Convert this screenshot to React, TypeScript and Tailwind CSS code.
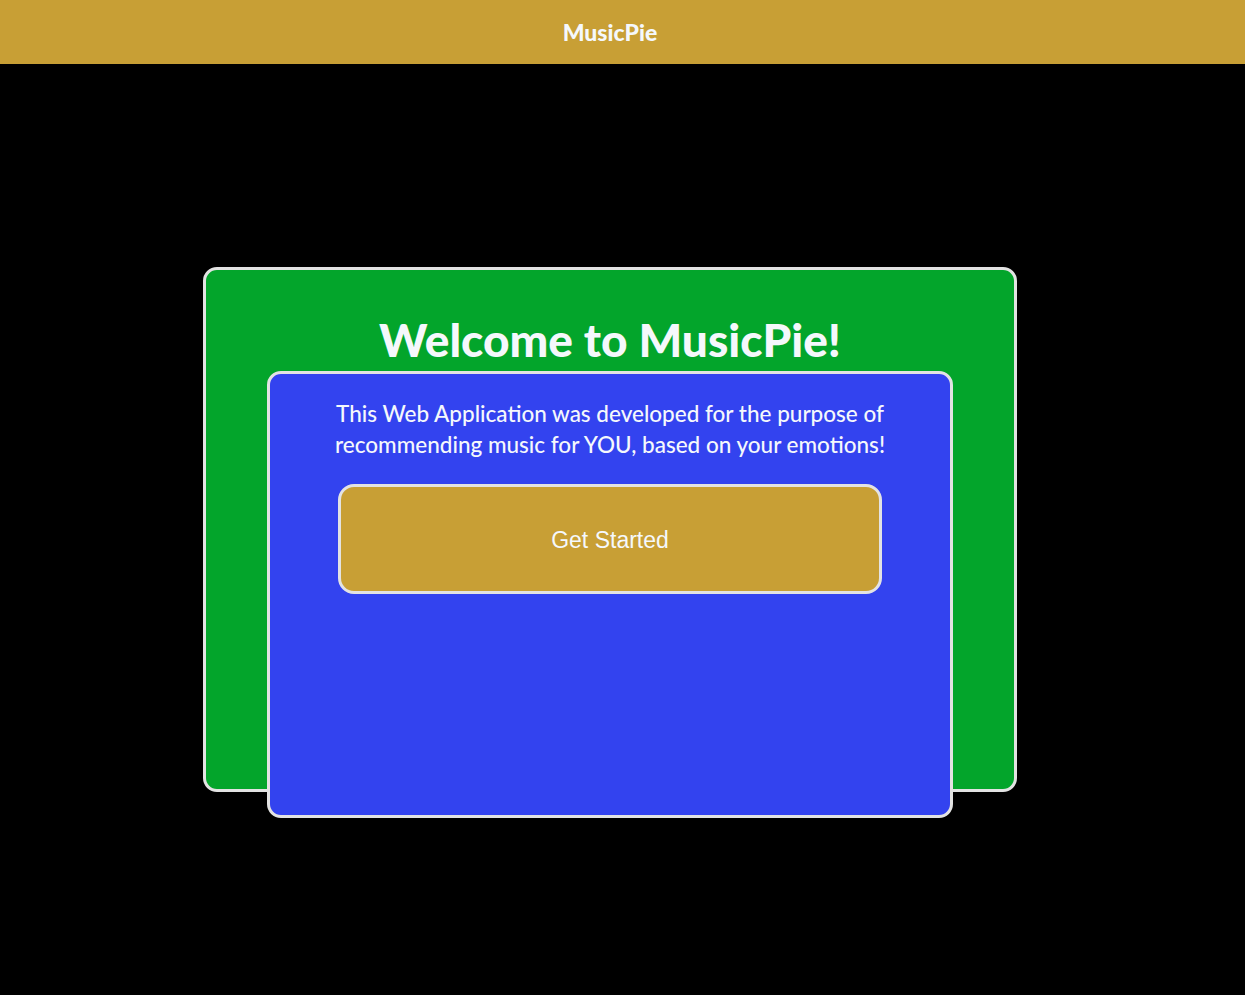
export default function App() {
  return (
    <div className="min-h-screen bg-black flex flex-col">
      <header className="h-16 bg-[#c89f35] flex items-center justify-center pr-[25px] shrink-0">
        <span className="text-[#f5f8fc] text-[23px] font-black font-['Lato',sans-serif]">MusicPie</span>
      </header>
      <main className="flex-1 flex items-center justify-center pr-[25px]">
        <div className="w-[814px] h-[525px] bg-[#03a52b] border-[3px] border-[#e3e3e3] rounded-[14px] flex flex-col items-center pt-[44px]">
          <h1 className="text-[#f5f8fc] text-[46px] leading-[52px] font-black font-['Lato',sans-serif]">Welcome to MusicPie!</h1>
          <div className="mt-[5px] w-[686px] h-[447px] shrink-0 bg-[#3343ef] border-[3px] border-[#e3e3e3] rounded-[14px] flex flex-col items-center pt-[24px]">
            <p className="text-[#f5f8fc] text-[22.5px] leading-[31px] text-center font-medium font-['Lato',sans-serif] w-[620px]">
              This Web Application was developed for the purpose of recommending music for YOU, based on your emotions!
            </p>
            <button className="mt-[24px] w-[544px] h-[110px] shrink-0 bg-[#c89f35] border-[3px] border-[#e3e3e3] rounded-[16px] text-[#f5f8fc] text-[23px] pt-[3px] font-['Liberation_Sans',Arial,sans-serif]">
              Get Started
            </button>
          </div>
        </div>
      </main>
    </div>
  );
}
